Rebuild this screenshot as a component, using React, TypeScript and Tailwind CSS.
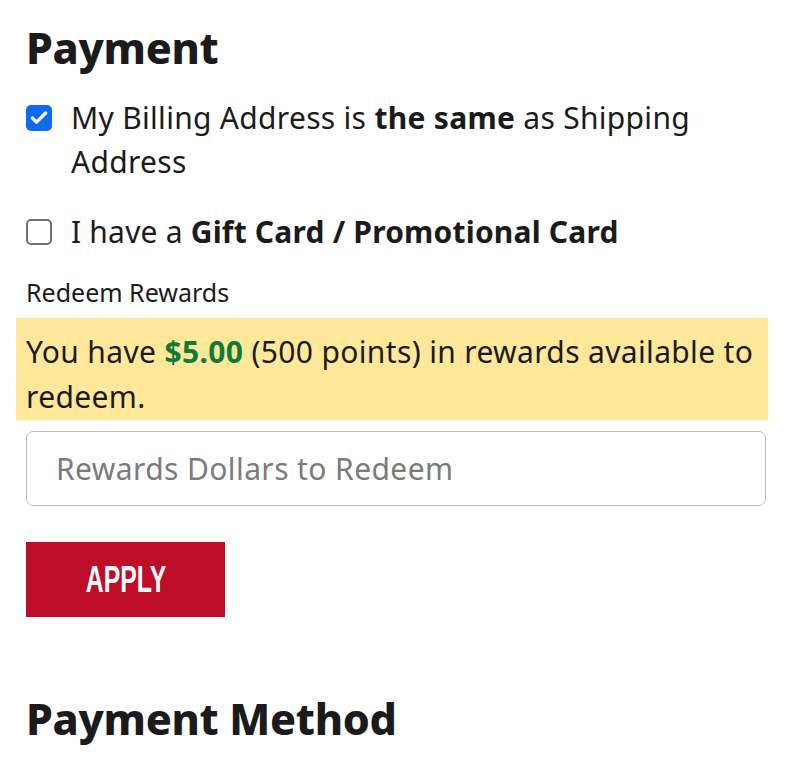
import { Check } from "lucide-react";

const font = { fontFamily: "'Noto Sans', sans-serif" };

function Box({ checked }: { checked?: boolean }) {
  return checked ? (
    <span className="mt-[9px] grid h-[26px] w-[26px] shrink-0 place-items-center rounded-[5px] bg-[#0b6cf0]">
      <Check size={20} strokeWidth={4} className="text-white" />
    </span>
  ) : (
    <span className="mt-[9px] h-[26px] w-[26px] shrink-0 rounded-[5px] border-2 border-[#6f6f6f] bg-white" />
  );
}

export default function App() {
  return (
    <div className="min-h-screen bg-white px-[26px] pt-[22px] text-[#1b1b1b]" style={font}>
      <h2 className="text-[43px] font-extrabold leading-[52px] tracking-[-0.3px]">Payment</h2>

      <label className="mt-[22px] flex gap-[19px] text-[30px] leading-[44px] tracking-[0.3px]">
        <Box checked />
        <span>
          My Billing Address is <b className="font-bold">the same</b> as Shipping Address
        </span>
      </label>

      <label className="mt-[26px] flex gap-[19px] text-[30px] leading-[44px] tracking-[0.2px]">
        <Box />
        <span>
          I have a <b className="font-bold">Gift Card / Promotional Card</b>
        </span>
      </label>

      <p className="mt-[23px] text-[25px] leading-[30px]">Redeem Rewards</p>

      <div className="-mx-[10px] mt-[11px] w-[752px] bg-[#ffe89a] px-[10px] pb-[1px] pt-[11px] text-[30px] leading-[45px] tracking-[0.35px]">
        You have <b className="font-bold text-[#117a38]">$5.00</b> (500 points) in rewards available to redeem.
      </div>

      <input
        className="mt-[11px] block h-[75px] w-[740px] rounded-[7px] border border-[#bdbdbd] px-[29px] text-[30px] tracking-[0.4px] outline-none placeholder:text-[#7b7b7b]"
        placeholder="Rewards Dollars to Redeem"
      />

      <button className="mt-[36px] grid h-[75px] w-[199px] place-items-center bg-[#bd0d29] text-white">
        <span className="inline-block scale-x-[0.67] text-[37px] font-bold" style={{ fontFamily: "'Liberation Sans', Arial, sans-serif" }}>
          APPLY
        </span>
      </button>

      <h2 className="mt-[76px] text-[43px] font-extrabold leading-[52px] tracking-[-0.3px]">Payment Method</h2>
    </div>
  );
}
